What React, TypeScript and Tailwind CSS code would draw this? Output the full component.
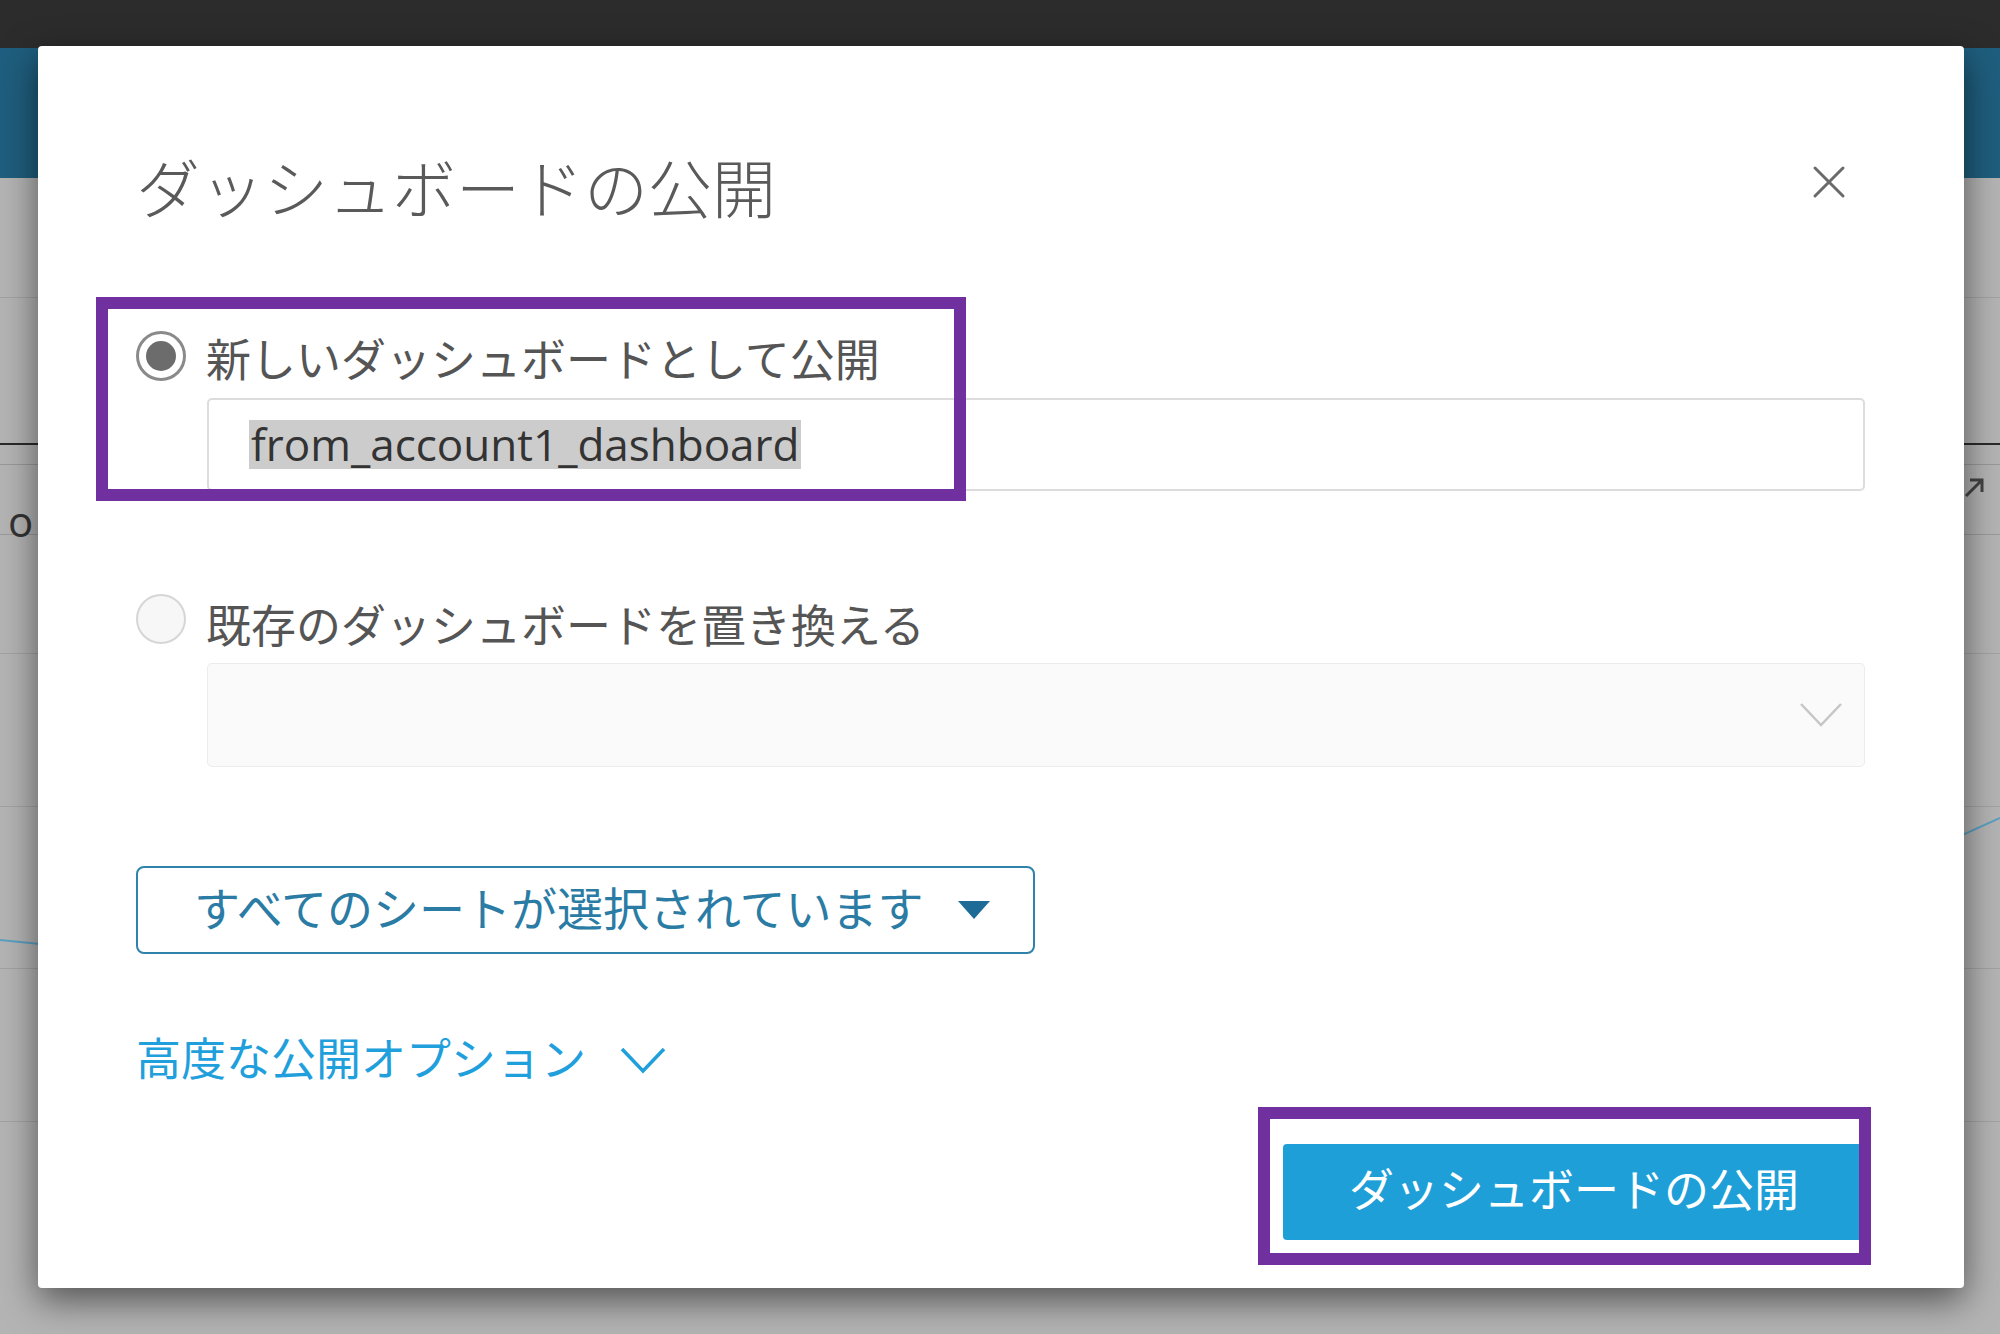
import React from "react";

const jp = { fontFamily: '"Noto Sans CJK JP", "Noto Sans", sans-serif' };

function Background() {
  return (
    <div className="flex h-[1334px] w-[2000px] flex-col bg-[#b4b4b4]">
      <div className="h-[48px] shrink-0 bg-[#2c2c2c]" />
      <div className="h-[130px] shrink-0 bg-[#1f5e7e]" />
      <div className="h-[120px] shrink-0 border-b border-[#a2a2a2]" />
      <div className="h-[147px] shrink-0 border-b-2 border-[#2a2a2a]" />
      <div className="h-[20px] shrink-0 border-b border-[#999]" />
      <div className="relative h-[70px] shrink-0 border-b border-[#9a9a9a]" />
      <div className="h-[119px] shrink-0 border-b border-[#a2a2a2]" />
      <div className="h-[153px] shrink-0 border-b border-[#a2a2a2]" />
      <div className="h-[162px] shrink-0 border-b border-[#a2a2a2]" />
      <div className="h-[153px] shrink-0 border-b border-[#a2a2a2]" />
      <div className="flex-1" />
    </div>
  );
}

export default function App() {
  return (
    <div className="relative h-[1334px] w-[2000px] overflow-hidden">
      <Background />
      {/* items of the dashboard behind the modal */}
      <span
        className="absolute left-[8px] top-[500px] text-[42px] leading-none text-[#333]"
        style={{ fontFamily: '"Open Sans", sans-serif' }}
      >
        o
      </span>
      <svg className="absolute left-[1962px] top-[476px]" width="24" height="24" viewBox="0 0 24 24">
        <path d="M4 20 L20 4 M8 4 L20 4 L20 16" stroke="#444" strokeWidth="3" fill="none" />
      </svg>
      <svg className="absolute left-0 top-[930px]" width="40" height="20">
        <path d="M0 10 L40 14" stroke="#5aa0c0" strokeWidth="2" fill="none" />
      </svg>
      <svg className="absolute right-0 top-[800px]" width="40" height="40">
        <path d="M0 36 L40 18" stroke="#5aa0c0" strokeWidth="2" fill="none" />
      </svg>

      {/* Modal */}
      <div
        className="absolute left-[38px] top-[46px] flex h-[1242px] w-[1926px] flex-col rounded-[4px] bg-white pl-[98px] pr-[99px] pt-[107px] shadow-[0_12px_36px_rgba(0,0,0,0.55)]"
        style={jp}
      >
        {/* title row */}
        <div className="flex h-[64px] items-center justify-between">
          <h1 className="text-[64px] font-light leading-none text-[#5a5a5a]">ダッシュボードの公開</h1>
          <svg width="34" height="34" viewBox="0 0 34 34" className="mr-[19px] -mt-[6px]">
            <path d="M3 3 L31 31 M31 3 L3 31" stroke="#6a6a6a" strokeWidth="3" strokeLinecap="round" />
          </svg>
        </div>

        {/* radio 1 */}
        <div className="mt-[114px] flex h-[50px] items-center gap-[20px]">
          <div className="flex h-[50px] w-[50px] shrink-0 items-center justify-center rounded-full border-[3px] border-[#8a8a8a] bg-white">
            <div className="h-[30px] w-[30px] rounded-full bg-[#6c6c6c]" />
          </div>
          <span className="mt-[3px] text-[45px] leading-none text-[#555]">新しいダッシュボードとして公開</span>
        </div>
        <div className="ml-[71px] mt-[17px] flex h-[93px] items-center rounded-[5px] border-2 border-[#dcdcdc] bg-white pl-[40px]">
          <span
            className="bg-[#cccccc] px-[2px] text-[44px] leading-[49px] text-[#333]"
            style={{ fontFamily: '"Open Sans", "Noto Sans", sans-serif' }}
          >
            from_account1_dashboard
          </span>
        </div>

        {/* radio 2 */}
        <div className="mt-[103px] flex h-[50px] items-center gap-[20px]">
          <div className="h-[50px] w-[50px] shrink-0 rounded-full border-2 border-[#d6d6d6] bg-[#f7f7f7]" />
          <span className="mt-[8px] text-[45px] leading-none text-[#555]">既存のダッシュボードを置き換える</span>
        </div>
        <div className="ml-[71px] mt-[19px] flex h-[104px] items-center justify-end rounded-[5px] border border-[#ececec] bg-[#fafafa] pr-[21px]">
          <svg width="44" height="26" viewBox="0 0 44 26">
            <path d="M2 2 L22 23 L42 2" stroke="#c6c6c6" strokeWidth="2.5" fill="none" />
          </svg>
        </div>

        {/* sheets button */}
        <div className="mt-[99px] flex h-[88px] w-[899px] items-center rounded-[8px] border-2 border-[#2f82aa] pb-[8px] pl-[56px]">
          <span className="text-[46px] leading-none text-[#2b7ca5]">すべてのシートが選択されています</span>
          <svg width="32" height="18" viewBox="0 0 32 18" className="ml-[34px] mt-[8px]">
            <path d="M0 0 L32 0 L16 18 Z" fill="#1d6b96" />
          </svg>
        </div>

        {/* advanced */}
        <div className="mt-[80px] flex h-[45px] items-center">
          <span className="text-[45px] leading-none text-[#1fa0dc]">高度な公開オプション</span>
          <svg width="46" height="28" viewBox="0 0 46 28" className="ml-[34px] mt-[6px]">
            <path d="M2 3 L23 25 L44 3" stroke="#1fa0dc" strokeWidth="3.5" fill="none" />
          </svg>
        </div>

        {/* publish button */}
        <div className="mt-[65px] flex justify-end">
          <button className="flex h-[96px] w-[582px] items-center justify-center rounded-[4px] bg-[#1f9fd8] pb-[10px] text-[45px] leading-none text-white">
            ダッシュボードの公開
          </button>
        </div>

        {/* annotation boxes */}
        <div className="pointer-events-none absolute left-[58px] top-[251px] h-[204px] w-[870px] border-[12px] border-[#7030a0]" />
        <div className="pointer-events-none absolute left-[1220px] top-[1061px] h-[158px] w-[613px] border-[12px] border-[#7030a0]" />
      </div>
    </div>
  );
}
